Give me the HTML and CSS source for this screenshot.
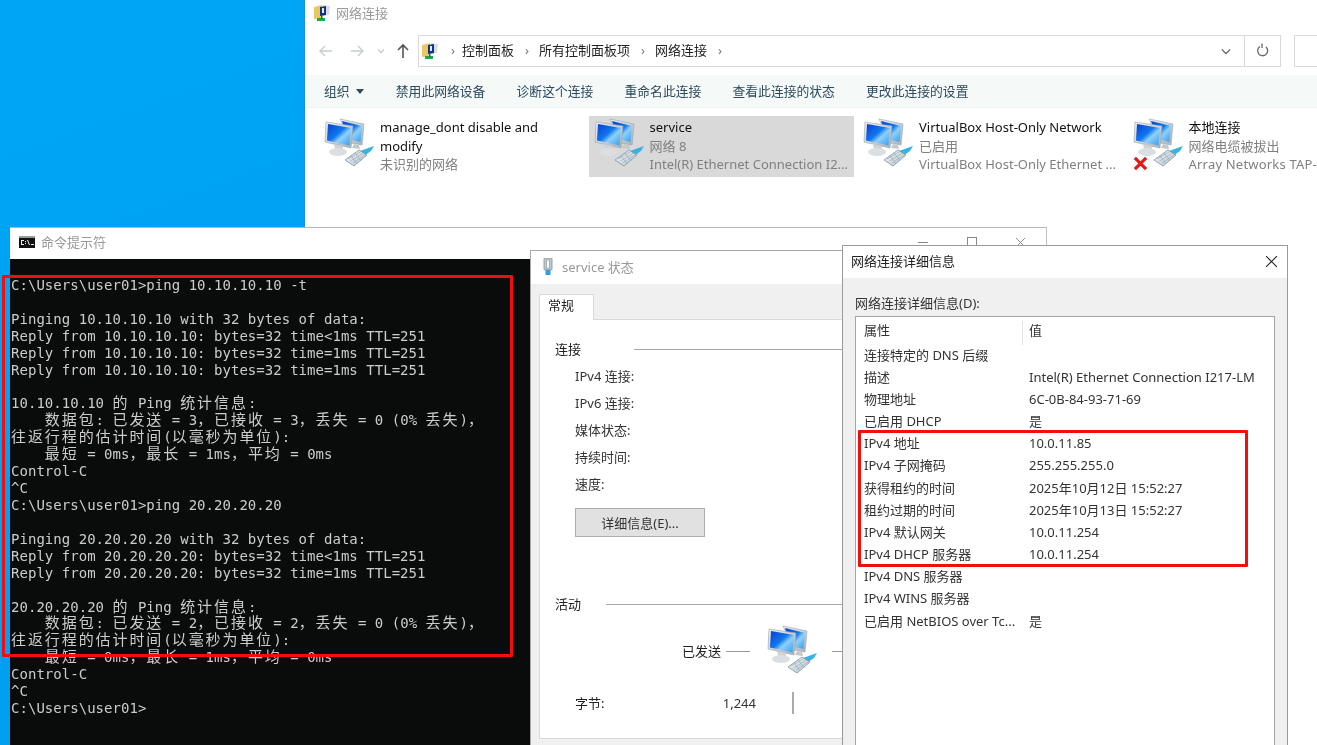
FILE: index.html
```html
<!DOCTYPE html>
<html lang="zh-CN">
<head>
<meta charset="utf-8">
<title>网络连接</title>
<link rel="stylesheet" href="styles.css">
</head>
<body>
<svg class="defs" width="0" height="0" aria-hidden="true">
  <defs>
    <linearGradient id="scr" x1="0" y1="0" x2="1" y2="1">
      <stop offset="0" stop-color="#0a3fd0"/><stop offset=".45" stop-color="#0f78ee"/><stop offset=".62" stop-color="#8fd0fa"/><stop offset="1" stop-color="#2f9cf0"/>
    </linearGradient>
    <linearGradient id="frm" x1="0" y1="0" x2="1" y2="1">
      <stop offset="0" stop-color="#eef2f5"/><stop offset="1" stop-color="#a9b0b6"/>
    </linearGradient>
    <linearGradient id="plg" x1="0" y1="0" x2="1" y2="1">
      <stop offset="0" stop-color="#f7fafb"/><stop offset="1" stop-color="#b4c2cc"/>
    </linearGradient>
    <symbol id="net" viewBox="0 0 52 52">
      <path d="M16 1 40 6 38 27 27 25Z" fill="url(#frm)" stroke="#9aa3aa" stroke-width=".6"/>
      <path d="M18 3 38 8 36.500 24 24 21Z" fill="url(#scr)"/>
      <path d="M30 26 35 27 36 31 28 30Z" fill="#c4c8cb"/>
      <path d="M2 4 29 8 27 30 1 24Z" fill="url(#frm)" stroke="#9aa3aa" stroke-width=".6"/>
      <path d="M4 6 27 10 25.500 27.500 3 22.500Z" fill="url(#scr)"/>
      <path d="M10 26 19 28 19 33 11 31Z" fill="#d0d3d6"/>
      <ellipse cx="14" cy="34" rx="9" ry="4" fill="#dcdfe1"/>
      <path d="M36 33 50 28 47 33 40 38Z" fill="#35b3e6"/>
      <path d="M21 42 35 32 43 37 30 48Z" fill="url(#plg)" stroke="#7d93a2" stroke-width=".8"/>
      <path d="M24 41 37 33.500M26.500 43 39.500 35M29 45 41.500 36.500M27 37.500 33 46M31 35 37 42.500" stroke="#8ea2b0" stroke-width=".6" fill="none"/>
    </symbol>
    <symbol id="folder-net" viewBox="0 0 16 18">
      <path d="M0 3 8 1 8 14 0 15Z" fill="#e8c860"/>
      <path d="M9 1 16 2 15 11 9 12Z" fill="#d9dde0"/>
      <path d="M6 3 12 2 12 11 6 12Z" fill="#12338c"/>
      <path d="M8 4 10 4 10 9 8 9Z" fill="#dfeefa"/>
      <path d="M3 14H11V17H3Z" fill="#19a84a"/>
      <path d="M7 11H8.500V15H7Z" fill="#0e7c34"/>
    </symbol>
  </defs>
</svg>

<main class="desktop">
  <section class="win explorer">
    <div class="exp-title">
      <svg class="ico16" aria-hidden="true"><use href="#folder-net"/></svg>
      <span>网络连接</span>
    </div>
    <div class="exp-nav">
      <div class="nav-btns">
        <svg class="nav-ico" viewBox="0 0 16 16" aria-hidden="true"><path d="M14 8H2M7 3 2 8l5 5" class="arrow-off"/></svg>
        <svg class="nav-ico" viewBox="0 0 16 16" aria-hidden="true"><path d="M2 8H14M9 3l5 5-5 5" class="arrow-off"/></svg>
        <svg class="nav-caret" viewBox="0 0 8 8" aria-hidden="true"><path d="M1 2.500 4 5.500 7 2.500" class="arrow-off"/></svg>
        <svg class="nav-ico" viewBox="0 0 16 16" aria-hidden="true"><path d="M8 15V2M3 7l5-5 5 5" class="arrow-on"/></svg>
      </div>
      <div class="address">
        <svg class="ico16" aria-hidden="true"><use href="#folder-net"/></svg>
        <span class="crumb-sep">›</span><span>控制面板</span>
        <span class="crumb-sep">›</span><span>所有控制面板项</span>
        <span class="crumb-sep">›</span><span>网络连接</span>
        <span class="crumb-sep">›</span>
        <span class="addr-fill"></span>
        <svg class="addr-drop" viewBox="0 0 12 8" aria-hidden="true"><path d="M1 1.500 6 6.500 11 1.500"/></svg>
        <span class="addr-refresh">
          <svg viewBox="0 0 14 16" width="14" height="16" aria-hidden="true"><path d="M4 3.500A5 5 0 1 0 10 4M6 0.500V5" fill="none" stroke="#666" stroke-width="1.300"/></svg>
        </span>
      </div>
      <div class="search"></div>
    </div>
    <nav class="exp-tools">
      <span class="tool-org">组织<i class="caret"></i></span>
      <span>禁用此网络设备</span>
      <span>诊断这个连接</span>
      <span>重命名此连接</span>
      <span>查看此连接的状态</span>
      <span>更改此连接的设置</span>
    </nav>
    <div class="adapters">
      <article class="adapter">
        <svg class="net-ico" aria-hidden="true"><use href="#net"/></svg>
        <div class="ad-text">
          <div class="ad-name ad-wrap">manage_dont disable and modify</div>
          <div class="ad-sub">未识别的网络</div>
        </div>
      </article>
      <article class="adapter selected">
        <svg class="net-ico" aria-hidden="true"><use href="#net"/></svg>
        <div class="ad-text">
          <div class="ad-name">service</div>
          <div class="ad-sub">网络 8</div>
          <div class="ad-sub">Intel(R) Ethernet Connection I2...</div>
        </div>
      </article>
      <article class="adapter">
        <svg class="net-ico" aria-hidden="true"><use href="#net"/></svg>
        <div class="ad-text">
          <div class="ad-name">VirtualBox Host-Only Network</div>
          <div class="ad-sub">已启用</div>
          <div class="ad-sub">VirtualBox Host-Only Ethernet ...</div>
        </div>
      </article>
      <article class="adapter">
        <span class="ico-wrap">
          <svg class="net-ico" aria-hidden="true"><use href="#net"/></svg>
          <svg class="x-badge" viewBox="0 0 16 16" aria-hidden="true"><path d="M2 2 14 14M14 2 2 14"/></svg>
        </span>
        <div class="ad-text">
          <div class="ad-name">本地连接</div>
          <div class="ad-sub">网络电缆被拔出</div>
          <div class="ad-sub ad-edge">Array Networks TAP-</div>
        </div>
      </article>
    </div>
  </section>

  <section class="win cmd">
    <header class="cmd-title">
      <svg class="cmd-ico" viewBox="0 0 16 12" aria-hidden="true">
        <rect width="16" height="12" fill="#111"/><rect width="16" height="2" fill="#9a9a9a"/>
        <path d="M2 4H5V5H2ZM2 5H3V8H2ZM2 8H5V9H2ZM6 5H7V6H6ZM6 7H7V8H6ZM8 4 9 4 11 9 10 9ZM12 8H15V9H12Z" fill="#eee"/>
      </svg>
      <span class="cmd-name">命令提示符</span>
      <span class="cmd-fill"></span>
      <i class="wc-min"></i><i class="wc-max"></i>
      <svg class="wc-x" viewBox="0 0 12 12" aria-hidden="true"><path d="M1 1 11 11M11 1 1 11"/></svg>
    </header>
<pre class="console">C:\Users\user01&gt;ping 10.10.10.10 -t

Pinging 10.10.10.10 with 32 bytes of data:
Reply from 10.10.10.10: bytes=32 time&lt;1ms TTL=251
Reply from 10.10.10.10: bytes=32 time=1ms TTL=251
Reply from 10.10.10.10: bytes=32 time=1ms TTL=251

10.10.10.10 <b>的</b> Ping <b>统计信息</b>:
    <b>数据包</b>: <b>已发送</b> = 3<b>，已接收</b> = 3<b>，丢失</b> = 0 (0% <b>丢失</b>)<b>，</b>
<b>往返行程的估计时间</b>(<b>以毫秒为单位</b>):
    <b>最短</b> = 0ms<b>，最长</b> = 1ms<b>，平均</b> = 0ms
Control-C
^C
C:\Users\user01&gt;ping 20.20.20.20

Pinging 20.20.20.20 with 32 bytes of data:
Reply from 20.20.20.20: bytes=32 time&lt;1ms TTL=251
Reply from 20.20.20.20: bytes=32 time=1ms TTL=251

20.20.20.20 <b>的</b> Ping <b>统计信息</b>:
    <b>数据包</b>: <b>已发送</b> = 2<b>，已接收</b> = 2<b>，丢失</b> = 0 (0% <b>丢失</b>)<b>，</b>
<b>往返行程的估计时间</b>(<b>以毫秒为单位</b>):
    <b>最短</b> = 0ms<b>，最长</b> = 1ms<b>，平均</b> = 0ms
Control-C
^C
C:\Users\user01&gt;</pre>
  </section>

  <section class="win status">
    <header class="st-title">
      <svg class="st-ico" viewBox="0 0 10 18" aria-hidden="true">
        <rect x="1" y="0" width="8" height="12" rx="1" fill="#c4ccd2" stroke="#7f8a92" stroke-width=".8"/>
        <rect x="3.500" y="2" width="3" height="8" fill="#fff" stroke="#7f8a92" stroke-width=".6"/>
        <rect x="2.500" y="12" width="5" height="5" fill="#2f9fd8"/>
      </svg>
      <span>service 状态</span>
    </header>
    <div class="st-body">
      <div class="tab">常规</div>
      <div class="panel">
        <div class="group-head"><span>连接</span><i></i></div>
        <dl class="st-rows">
          <dt>IPv4 连接:</dt>
          <dt>IPv6 连接:</dt>
          <dt>媒体状态:</dt>
          <dt>持续时间:</dt>
          <dt>速度:</dt>
        </dl>
        <button class="btn" type="button">详细信息(E)...</button>
        <div class="group-head activity"><span>活动</span><i></i></div>
        <div class="activity-row">
          <span class="sent">已发送</span>
          <i class="dash"></i>
          <svg class="net-ico" aria-hidden="true"><use href="#net"/></svg>
          <i class="dash-r"></i>
        </div>
        <div class="bytes-row">
          <span class="bytes-l">字节:</span>
          <span class="bytes-v">1,244</span>
          <i class="bytes-sep"></i>
        </div>
      </div>
    </div>
  </section>

  <section class="win details">
    <header class="dt-title">
      <span>网络连接详细信息</span>
      <svg class="dt-x" viewBox="0 0 12 12" aria-hidden="true"><path d="M1 1 11 11M11 1 1 11"/></svg>
    </header>
    <div class="dt-body">
      <div class="dt-label">网络连接详细信息(D):</div>
      <div class="listbox">
        <div class="lb-head"><span class="c1">属性</span><span class="c2">值</span></div>
        <div class="lb-row"><span class="c1">连接特定的 DNS 后缀</span><span class="c2"></span></div>
        <div class="lb-row"><span class="c1">描述</span><span class="c2">Intel(R) Ethernet Connection I217-LM</span></div>
        <div class="lb-row"><span class="c1">物理地址</span><span class="c2">6C-0B-84-93-71-69</span></div>
        <div class="lb-row"><span class="c1">已启用 DHCP</span><span class="c2">是</span></div>
        <div class="lb-row"><span class="c1">IPv4 地址</span><span class="c2">10.0.11.85</span></div>
        <div class="lb-row"><span class="c1">IPv4 子网掩码</span><span class="c2">255.255.255.0</span></div>
        <div class="lb-row"><span class="c1">获得租约的时间</span><span class="c2">2025年10月12日 15:52:27</span></div>
        <div class="lb-row"><span class="c1">租约过期的时间</span><span class="c2">2025年10月13日 15:52:27</span></div>
        <div class="lb-row"><span class="c1">IPv4 默认网关</span><span class="c2">10.0.11.254</span></div>
        <div class="lb-row"><span class="c1">IPv4 DHCP 服务器</span><span class="c2">10.0.11.254</span></div>
        <div class="lb-row"><span class="c1">IPv4 DNS 服务器</span><span class="c2"></span></div>
        <div class="lb-row"><span class="c1">IPv4 WINS 服务器</span><span class="c2"></span></div>
        <div class="lb-row"><span class="c1">已启用 NetBIOS over Tc...</span><span class="c2">是</span></div>
      </div>
    </div>
  </section>

  <div class="mark mark-console"></div>
  <div class="mark mark-details"></div>
</main>
</body>
</html>
```

FILE: styles.css
```css
* { box-sizing: border-box; }
html, body { margin: 0; height: 100%; overflow: hidden; }
body { font: 13px/18px "Noto Sans", "Noto Sans CJK SC", sans-serif; color: #222; }
.defs { position: absolute; }
i { display: block; font-style: normal; }

.desktop {
  position: relative;
  width: 1317px;
  height: 745px;
  overflow: hidden;
  background: linear-gradient(160deg, #00a6f6 0%, #009ff0 60%, #00a9f7 100%);
  filter: blur(.55px);
}
.win { position: absolute; overflow: hidden; }

/* Explorer */
.explorer { left: 304px; top: 0; width: 1013px; height: 745px; background: #fff; border-left: 1px solid #1b8fd0; padding-left: 1px; }
.exp-title { height: 30px; padding: 0 0 4px 8px; display: flex; align-items: center; gap: 6px; color: #999; }
.ico16 { width: 16px; height: 18px; flex: none; }
.exp-nav { height: 45px; padding-top: 5px; display: flex; align-items: flex-start; }
.nav-btns { width: 112px; height: 32px; padding-left: 12px; display: flex; align-items: center; flex: none; }
.nav-ico { width: 16px; height: 16px; margin-right: 15px; fill: none; flex: none; }
.nav-ico:nth-child(2) { margin-right: 12px; }
.nav-ico:nth-child(4) { margin-right: 0; }
.nav-caret { width: 8px; height: 8px; margin-right: 10px; fill: none; flex: none; }
.arrow-off { stroke: #c8ccd0; stroke-width: 1.4; }
.arrow-on { stroke: #555; stroke-width: 1.6; }
.address { width: 863px; height: 32px; border: 1px solid #d9d9d9; display: flex; align-items: center; padding-left: 3px; flex: none; }
.address > span:not(.addr-refresh) { margin-bottom: 2px; }
.address .ico16 { margin-right: 7px; }
.crumb-sep { width: 16px; text-align: center; color: #777; margin-left: 5px; margin-right: 4px; }
.crumb-sep:first-of-type { margin-left: 0; margin-right: 1px; }
.addr-fill { flex: 1; }
.addr-drop { width: 10px; height: 7px; margin-right: 13px; fill: none; stroke: #555; stroke-width: 1.4; }
.addr-refresh { width: 36px; height: 30px; border-left: 1px solid #d9d9d9; display: flex; align-items: center; justify-content: center; }
.search { width: 30px; height: 32px; margin-left: 13px; border: 1px solid #d9d9d9; border-right: 0; flex: none; }
.exp-tools { height: 33px; padding-left: 18px; display: flex; align-items: center; gap: 31.200px; background: #f5f9f8; border-bottom: 1px solid #eef2f1; color: #2d4a60; font-size: 12.800px; }
.tool-org { display: flex; align-items: center; gap: 6px; margin-right: 1px; }
.caret { width: 0; height: 0; border: 4px solid transparent; border-top: 5px solid #2d4a60; border-bottom: 0; }
.adapters { display: flex; padding: 8px 0 0 13px; width: 1300px; }
.adapter { width: 269.500px; flex: none; height: 61px; padding: 2px 5px; display: flex; gap: 4px; }
.adapter:nth-child(2) { width: 265px; margin-right: 4.500px; }
.selected { background: #d9d9d9; }
.net-ico { width: 52px; height: 52px; flex: none; display: block; }
.ico-wrap { position: relative; flex: none; width: 52px; height: 52px; }
.x-badge { position: absolute; left: 0; top: 38px; width: 15px; height: 15px; fill: none; stroke: #e01a1a; stroke-width: 3.400; }
.ad-text { min-width: 0; flex: 1; line-height: 18.500px; }
.ad-name { color: #111; white-space: nowrap; }
.ad-wrap { white-space: normal; }
.ad-sub { color: #808080; white-space: nowrap; }
.ad-edge { letter-spacing: .2px; }

/* Command prompt */
.cmd { left: 10px; top: 227px; width: 1037px; height: 518px; background: #0a0c0b; border-top: 1px solid #b5b5b5; border-right: 1px solid #c0c0c0; }
.cmd-title { height: 31px; background: #fff; display: flex; align-items: center; padding: 0 0 3px 9px; color: #999; }
.cmd-ico { width: 16px; height: 12px; margin-right: 6px; }
.cmd-fill { flex: 1; }
.wc-min { width: 10px; height: 1px; background: #888; margin-right: 38px; }
.wc-max { width: 10px; height: 10px; border: 1px solid #888; margin-right: 38px; margin-left: 1px; }
.wc-x { width: 11px; height: 11px; margin-right: 20px; fill: none; stroke: #888; stroke-width: 1; }
.console {
  margin: 0;
  padding: 18px 0 0 1px;
  font: 14px/16.920px "DejaVu Sans Mono", "Noto Sans CJK SC", monospace;
  letter-spacing: .03px;
  color: #cccccc;
}
.console b { font: 400 15px/0 "Noto Sans CJK SC", sans-serif; letter-spacing: 1.920px; }

/* Status dialog */
.status { left: 530px; top: 250px; width: 314px; height: 495px; background: #f0f0f0; border: 1px solid #a8a8a8; border-bottom: 0; }
.st-title { height: 33px; background: #fff; display: flex; align-items: center; gap: 9px; padding: 0 0 1px 12px; color: #999; }
.st-ico { width: 10px; height: 18px; }
.st-body { padding: 10px 0 0 8px; }
.tab { width: 55px; height: 26px; padding: 1px 0 0 8px; background: #fff; border: 1px solid #d9d9d9; border-bottom: 0; color: #222; margin-bottom: -1px; position: relative; z-index: 1; }
.panel { height: 420px; background: #fff; border: 1px solid #d9d9d9; border-right: 0; padding: 20px 0 0 15px; }
.group-head { display: flex; align-items: center; height: 18px; }
.group-head i { flex: 1; height: 1px; background: #a8a8a8; margin-left: 53px; }
.group-head.activity { margin-top: 58px; }
.activity i { margin-left: 25px; }
.st-rows { margin: 5px 0 0 20px; display: grid; grid-auto-rows: 27px; }
.st-rows dt { font-weight: 400; color: #333; line-height: 27px; }
.btn { display: block; margin: 10px 0 0 20px; width: 130px; height: 29px; background: #e1e1e1; border: 1px solid #adadad; font: inherit; color: #333; padding: 0; }
.activity-row { display: flex; align-items: center; margin-top: 12px; height: 52px; padding-left: 127px; }
.activity-row .net-ico { margin: 0 13px 0 17px; }
.sent { color: #222; flex: none; white-space: nowrap; }
.dash { width: 24px; height: 1px; background: #999; margin-left: 5px; flex: none; }
.dash-r { width: 20px; height: 1px; background: #999; flex: none; }
.bytes-row { display: flex; align-items: center; margin: 15px 0 0 20px; height: 22px; }
.bytes-l { width: 60px; }
.bytes-v { width: 121px; text-align: right; color: #333; }
.bytes-sep { width: 2px; height: 22px; background: #aaa; margin-left: 36px; }

/* Details dialog */
.details { left: 842px; top: 245px; width: 446px; height: 500px; background: #f0f0f0; border: 1px solid #9a9a9a; border-bottom: 0; }
.dt-title { height: 32px; background: #fff; display: flex; align-items: center; justify-content: space-between; padding: 0 9px 2px 8px; color: #222; }
.dt-x { width: 13px; height: 13px; fill: none; stroke: #222; stroke-width: 1; }
.dt-body { padding: 16px 12px 0 12px; }
.dt-label { height: 22px; color: #333; }
.listbox { height: 430px; background: #fff; border: 1px solid #a0a6aa; padding-left: 8px; }
.lb-head, .lb-row { display: grid; grid-template-columns: 165px 1fr; white-space: nowrap; color: #333; }
.lb-head { height: 26.500px; align-items: center; }
.lb-head .c2 { position: relative; }
.lb-head .c2::before { content: ""; position: absolute; left: -7px; top: 0; width: 1px; height: 24px; background: #e5e5e5; }
.lb-row { height: 22.180px; line-height: 22.180px; }

/* Red annotation boxes */
.mark { position: absolute; border: 3px solid #f40d0d; border-radius: 1px; }
.mark-console { left: 2px; top: 275px; width: 511px; height: 382px; }
.mark-details { left: 858px; top: 430px; width: 390px; height: 137px; }
```
